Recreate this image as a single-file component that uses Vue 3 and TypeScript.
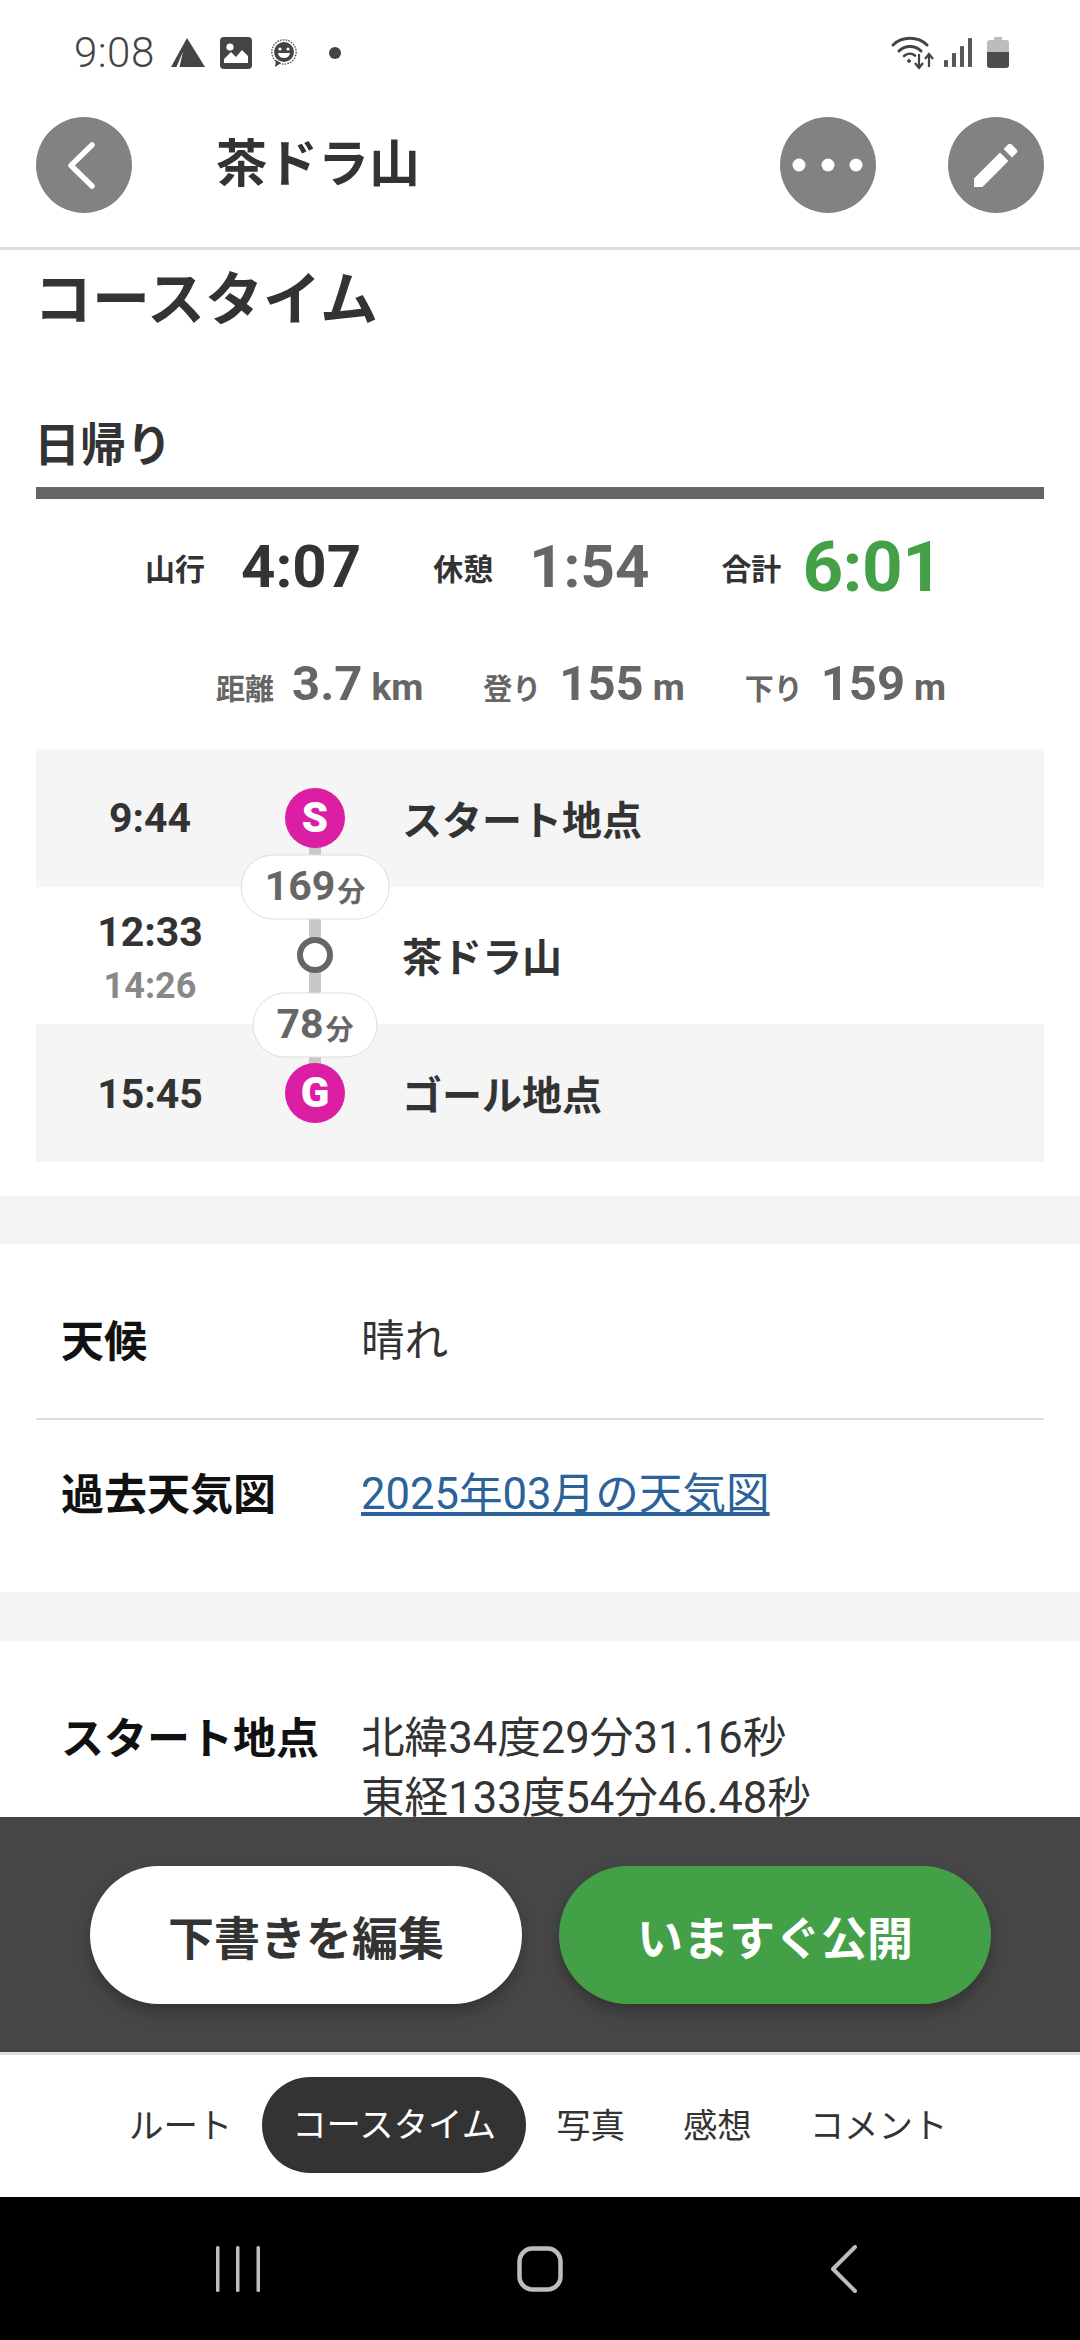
<script setup lang="ts">
interface Stat { label: string; value: string; tone: string }
interface Dist { label: string; value: string; unit: string }
const stats: Stat[] = [
  { label: '山行', value: '4:07', tone: 'dark' },
  { label: '休憩', value: '1:54', tone: 'grey' },
  { label: '合計', value: '6:01', tone: 'green' },
]
const dists: Dist[] = [
  { label: '距離', value: '3.7', unit: 'km' },
  { label: '登り', value: '155', unit: 'm' },
  { label: '下り', value: '159', unit: 'm' },
]
const tabs = ['ルート', 'コースタイム', '写真', '感想', 'コメント']
</script>

<template>
  <div class="screen">
    <div class="status">
      <span class="clock">9:08</span>
      <svg class="st-tent" width="34" height="29" viewBox="0 0 34 29"><path d="M16 0 34 29H0Z" fill="#444" /><path d="M12 13.5 8.5 29H5.5Z" fill="#fff" /></svg>
      <svg class="st-img" width="32" height="32" viewBox="0 0 32 32"><rect width="32" height="32" rx="4" fill="#444" /><circle cx="10" cy="10" r="3.6" fill="#fff" /><path d="M4 26V22L11 15 16 20 22 13 28 19V26Z" fill="#fff" /></svg>
      <svg class="st-chat" width="26" height="30" viewBox="0 0 26 30"><circle cx="13" cy="14" r="12.2" fill="none" stroke="#444" stroke-width="1.2" stroke-dasharray="1.6 1.2" /><circle cx="13" cy="14" r="10" fill="#444" /><circle cx="9" cy="11" r="1.6" fill="#fff" /><circle cx="17" cy="11" r="1.6" fill="#fff" /><path d="M7 15H19C18.5 19 15.500 20 13 20S7.500 19 7 15Z" fill="#fff" /><path d="M5 22 4 29 10 25Z" fill="#444" /></svg>
      <span class="st-dot"></span>
      <span class="st-spacer"></span>
      <svg class="st-wifi" width="46" height="34" viewBox="0 0 46 34" fill="none" stroke="#444" stroke-linecap="round"><path d="M2 9C11 0 27 0 36 9" stroke-width="3" /><path d="M8 15C14 9 24 9 30 15" stroke-width="3" /><path d="M13 20C16.500 17 21 17 24 19.500" stroke-width="2.600" /><circle cx="18" cy="25" r="1.400" fill="#444" stroke-width="1" /><path d="M28 18V31M24 27 28 32 32 27M38 31V19M34 23 38 18 42 23" stroke-width="2.200" stroke-linecap="butt" /></svg>
      <svg class="st-sig" width="28" height="30" viewBox="0 0 28 30" fill="#555"><rect x="0" y="22" width="4" height="7" rx="1" /><rect x="8" y="15" width="4" height="14" rx="1" /><rect x="16" y="8" width="4" height="21" rx="1" /><rect x="24" y="0" width="4" height="29" rx="1" /></svg>
      <svg class="st-bat" width="22" height="31" viewBox="0 0 22 31"><path d="M7 0H15V3H19Q22 3 22 6V15H0V6Q0 3 3 3H7Z" fill="#bcbcbc" /><path d="M0 15H22V28Q22 31 19 31H3Q0 31 0 28Z" fill="#4d4d4d" /></svg>
    </div>

    <header class="header">
      <button class="round back" aria-label="戻る">
        <svg width="96" height="96" viewBox="0 0 96 96" fill="none"><path d="M56 28 35 48.500 56 69" stroke="#fff" stroke-width="5.500" stroke-linecap="round" stroke-linejoin="round" /></svg>
      </button>
      <h1 class="title">茶ドラ山</h1>
      <button class="round more" aria-label="メニュー">
        <svg width="96" height="96" viewBox="0 0 96 96" fill="#fff"><circle cx="19" cy="48" r="6.500" /><circle cx="48" cy="48" r="6.500" /><circle cx="76" cy="48" r="6.500" /></svg>
      </button>
      <button class="round edit" aria-label="編集">
        <svg width="62" height="62" viewBox="0 0 24 24" fill="#fff"><path d="M3.500 17.250V20.500H6.750L16.800 10.450 13.550 7.200ZM20 7.250C20.350 6.900 20.350 6.350 20 6L18 4C17.650 3.650 17.100 3.650 16.750 4L14.950 5.800 18.200 9.050Z" /></svg>
      </button>
    </header>

    <main class="main">
      <h2 class="course">コースタイム</h2>
      <h3 class="day">日帰り</h3>
      <div class="rule"></div>

      <div class="stats">
        <div v-for="s in stats" :key="s.label" class="stat">
          <span class="stat-label">{{ s.label }}</span>
          <span class="stat-value" :class="s.tone">{{ s.value }}</span>
        </div>
      </div>

      <div class="dists">
        <div v-for="d in dists" :key="d.label" class="dist">
          <span class="dist-label">{{ d.label }}</span>
          <span class="dist-value">{{ d.value }}</span>
          <span class="dist-unit">{{ d.unit }}</span>
        </div>
      </div>

      <div class="timeline">
        <div class="line"></div>
        <div class="tl-row shaded">
          <div class="times"><span class="t-main">9:44</span></div>
          <div class="node"><span class="mark">S</span></div>
          <div class="place">スタート地点</div>
        </div>
        <div class="tl-row">
          <div class="times two"><span class="t-main">12:33</span><span class="t-sub">14:26</span></div>
          <div class="node"><span class="ring"></span></div>
          <div class="place">茶ドラ山</div>
        </div>
        <div class="tl-row shaded">
          <div class="times last"><span class="t-main">15:45</span></div>
          <div class="node"><span class="mark">G</span></div>
          <div class="place">ゴール地点</div>
        </div>
        <div class="pill first">169<small>分</small></div>
        <div class="pill second">78<small>分</small></div>
      </div>

      <div class="band band-a"></div>

      <dl class="info">
        <div class="info-row first-row">
          <dt>天候</dt>
          <dd>晴れ</dd>
        </div>
        <div class="info-row second-row">
          <dt>過去天気図</dt>
          <dd><a class="link">2025年03月の天気図</a></dd>
        </div>
      </dl>

      <div class="band"></div>

      <dl class="info">
        <div class="info-row third-row">
          <dt>スタート地点</dt>
          <dd>北緯34度29分31.16秒<br />東経133度54分46.48秒</dd>
        </div>
      </dl>
    </main>

    <div class="actions">
      <button class="cta white">下書きを編集</button>
      <button class="cta green-btn">いますぐ公開</button>
    </div>

    <nav class="tabs">
      <span v-for="t in tabs" :key="t" class="tab" :class="{ active: t === 'コースタイム' }">{{ t }}</span>
    </nav>

    <div class="sysnav">
      <svg width="44" height="46" viewBox="0 0 44 46" fill="#bdbdbd"><rect x="0" y="0" width="3.500" height="46" rx="1.500" /><rect x="20" y="0" width="3.500" height="46" rx="1.500" /><rect x="40.500" y="0" width="3.500" height="46" rx="1.500" /></svg>
      <svg width="46" height="46" viewBox="0 0 46 46" fill="none"><rect x="2.500" y="2.500" width="41" height="41" rx="13" stroke="#bdbdbd" stroke-width="4.500" /></svg>
      <svg width="28" height="48" viewBox="0 0 28 48" fill="none"><path d="M25 2 3 24 25 46" stroke="#bdbdbd" stroke-width="4" stroke-linecap="round" stroke-linejoin="round" /></svg>
    </div>
  </div>
</template>

<style scoped>
.screen {
  width: 1080px;
  height: 2340px;
  display: flex;
  flex-direction: column;
  overflow: hidden;
  background: #fff;
  color: #333;
  font-family: Roboto, "Noto Sans CJK JP", sans-serif;
}
button { border: 0; padding: 0; font-family: inherit; }

.status {
  height: 100px;
  flex: none;
  display: flex;
  align-items: center;
  padding: 5px 71px 0 74px;
  box-sizing: border-box;
}
.clock { font-size: 42px; font-weight: 300; color: #444; width: 97px; letter-spacing: 0.5px; }
.st-img { margin-left: 15px; }
.st-chat { margin-left: 19px; }
.st-dot { width: 12px; height: 12px; border-radius: 50%; background: #444; margin-left: 32px; }
.st-spacer { flex: 1; }
.st-sig { margin-left: 7px; }
.st-bat { margin-left: 15px; }

.header {
  height: 150px;
  flex: none;
  box-sizing: border-box;
  border-bottom: 3px solid #ddd;
  display: flex;
  align-items: flex-start;
  padding: 17px 36px 0;
}
.round {
  width: 96px;
  height: 96px;
  border-radius: 50%;
  background: #828282;
  display: flex;
  align-items: center;
  justify-content: center;
  flex: none;
}
.title {
  margin: 0 0 0 84px;
  font-size: 51px;
  line-height: 96px;
  font-weight: 700;
  color: #333;
  flex: 1;
}
.edit { margin-left: 72px; }

.main { flex: 1; min-height: 0; overflow: hidden; }
.course {
  margin: 20px 34px 0;
  font-size: 58px;
  line-height: 60px;
  font-weight: 700;
}
.day {
  margin: 87px 34px 0;
  font-size: 46px;
  line-height: 56px;
  font-weight: 700;
}
.rule { height: 12px; margin: 14px 36px 0; background: #666; }

.stats {
  margin-top: 28px;
  height: 80px;
  display: flex;
  align-items: center;
  padding-left: 145px;
  gap: 72px;
}
.stat { display: flex; align-items: center; gap: 36px; }
.stat:last-child { gap: 21px; }
.stat-label { font-size: 30px; font-weight: 700; color: #333; }
.stat-value { font-size: 60px; font-weight: 700; line-height: 80px; }
.stat-value.dark { color: #333; }
.stat-value.grey { color: #666; }
.stat-value.green { color: #43a047; font-size: 71px; letter-spacing: -0.5px; }

.dists {
  margin-top: 48px;
  height: 60px;
  display: flex;
  align-items: baseline;
  padding-left: 216px;
  color: #666;
  gap: 60px;
}
.dist { display: flex; align-items: baseline; }
.dist-label { font-size: 29px; font-weight: 700; margin-right: 18px; }
.dist-value { font-size: 49px; font-weight: 700; }
.dist-unit { font-size: 37px; font-weight: 700; margin-left: 9px; }

.timeline {
  position: relative;
  margin: 34px 36px 0;
}
.line {
  position: absolute;
  left: 273px;
  top: 70px;
  width: 12px;
  height: 275px;
  background: #c8c8c8;
}
.tl-row {
  height: 137.5px;
  display: grid;
  grid-template-columns: 228px 102px 1fr;
  align-items: center;
}
.shaded { background: #f5f5f5; }
.times { display: flex; flex-direction: column; align-items: center; font-weight: 700; }
.times.two { padding-top: 8px; }
.times.last { padding-top: 3px; }
.t-main { font-size: 41px; line-height: 54px; color: #333; }
.t-sub { font-size: 36px; line-height: 54px; color: #888; }
.node { position: relative; z-index: 1; display: flex; justify-content: center; }
.mark {
  width: 60px;
  height: 60px;
  border-radius: 50%;
  background: #db1ea3;
  color: #fff;
  font-size: 42px;
  font-weight: 900;
  display: flex;
  align-items: center;
  justify-content: center;
}
.ring {
  width: 36px;
  height: 36px;
  box-sizing: border-box;
  border-radius: 50%;
  border: 6px solid #666;
  background: #fff;
}
.place { padding-left: 36px; font-size: 40px; font-weight: 700; color: #333; }
.pill {
  position: absolute;
  left: 279px;
  z-index: 2;
  transform: translate(-50%, -50%);
  box-sizing: border-box;
  height: 65px;
  padding: 0 23px 4px;
  background: #fff;
  border: 1.5px solid #ddd;
  border-radius: 33px;
  display: flex;
  align-items: center;
  white-space: nowrap;
  font-size: 41px;
  font-weight: 700;
  color: #666;
}
.pill small { font-size: 28px; margin-left: 2px; margin-top: 8px; font-weight: 700; }
.pill.first { top: 138px; }
.pill.second { top: 276px; }

.band { height: 49px; background: #f5f5f5; }
.band-a { margin-top: 34px; height: 48px; }

.info { margin: 0; }
.info-row {
  margin: 0 36px;
  display: grid;
  grid-template-columns: 300px 1fr;
  padding-left: 25px;
  box-sizing: border-box;
  font-size: 43.6px;
  line-height: 60px;
}
.first-row { padding-top: 68px; padding-bottom: 46px; border-bottom: 2px solid #ddd; }
.second-row { padding-top: 45px; padding-bottom: 67px; }
.third-row { padding-top: 68px; }
dt { font-weight: 700; color: #111; font-size: 43px; }
dd { margin: 0; color: #333; font-weight: 400; }
.link { color: #2a6299; text-decoration: underline; }

.actions {
  height: 235px;
  flex: none;
  box-sizing: border-box;
  background: #464646;
  display: flex;
  padding: 49px 0 0 90px;
  gap: 37px;
}
.cta {
  width: 432px;
  height: 138px;
  border-radius: 69px;
  font-size: 46px;
  font-weight: 700;
  box-shadow: 0 8px 14px rgba(0, 0, 0, 0.25);
}
.white { background: #fff; color: #333; }
.green-btn { background: #43a047; color: #fff; }

.tabs {
  height: 145px;
  flex: none;
  box-sizing: border-box;
  border-top: 3px solid #ddd;
  display: flex;
  align-items: center;
  padding-left: 100px;
  font-size: 34.4px;
  color: #333;
}
.tab { padding: 0 29px; line-height: 96px; }
.tab.active { background: #333; color: #fff; border-radius: 48px; padding: 0 30px; margin: 0 1px 2px 1px; }

.sysnav {
  height: 143px;
  flex: none;
  background: #000;
  position: relative;
  display: grid;
  grid-template-columns: 216px 44px 257px 46px 267px 28px;
  align-items: center;
}
.sysnav svg:nth-child(1) { grid-column: 2; }
.sysnav svg:nth-child(2) { grid-column: 4; }
.sysnav svg:nth-child(3) { grid-column: 6; }
</style>
